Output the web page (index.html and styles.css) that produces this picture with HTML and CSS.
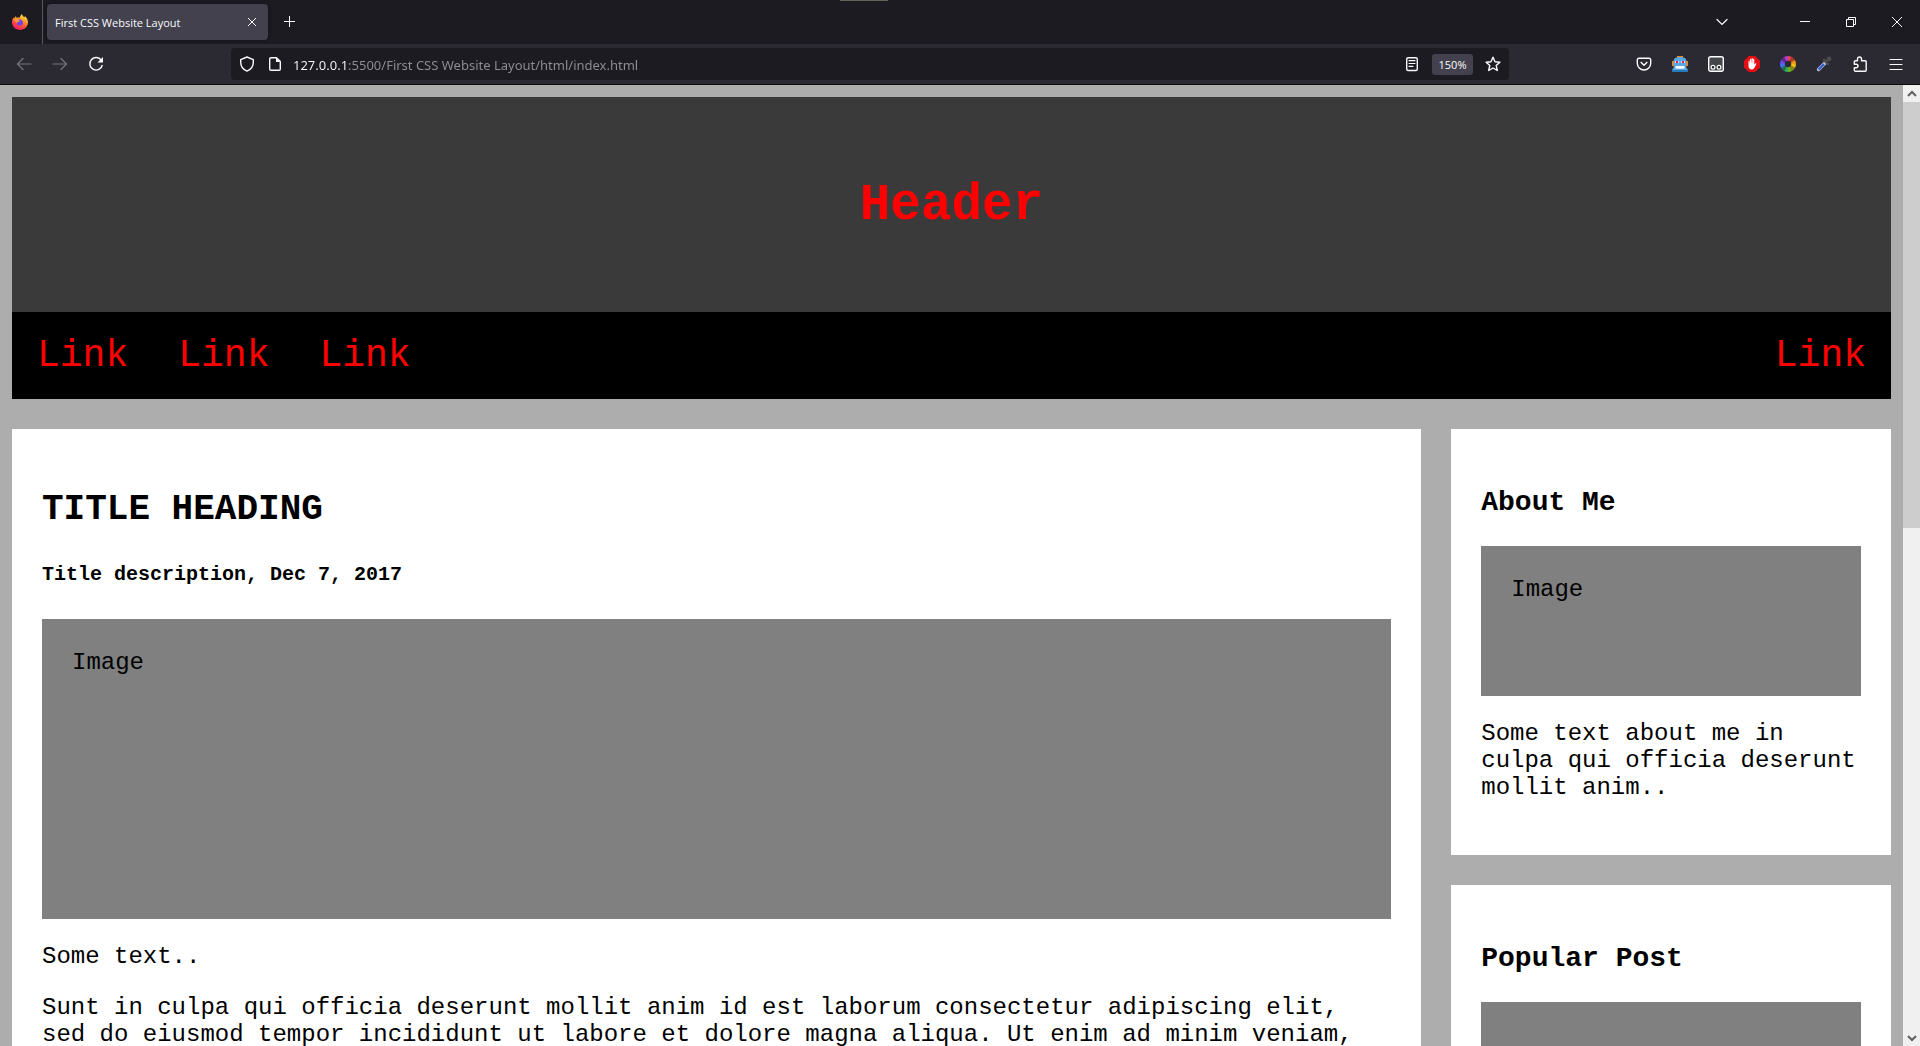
FILE: index.html
```html
<!DOCTYPE html>
<html lang="en">
<head>
<meta charset="utf-8">
<title>First CSS Website Layout</title>
<link rel="stylesheet" href="styles.css">
</head>
<body>
<header class="tabstrip">
  <div class="brand">
    <svg width="16" height="16" viewBox="0 0 16 16">
      <defs>
        <linearGradient id="flame" x1="0.8" y1="0" x2="0.3" y2="1"><stop offset="0" stop-color="#fff04a"/><stop offset=".35" stop-color="#ffa22b"/><stop offset=".65" stop-color="#ff5035"/><stop offset="1" stop-color="#f0186c"/></linearGradient>
      </defs>
      <path d="M10 0c.3 1.700 1.300 2.300 2.200 3.200.5-.1.600-.8.600-1.200C14.600 3.500 16 5.700 16 8.200c0 4.400-3.500 7.700-8 7.700s-8-3.400-8-7.700c0-2 .8-3.700 1.700-4.700L2.500 4C2.700 3.200 3.300 2.500 4 2c-.1.800.3 1.500.9 1.700C6.200 3.400 7 3.600 7.500 3.900 8 2.300 9 1 10 0z" fill="url(#flame)"/>
      <path d="M5.300 6.200c1-.9 2.800-1.200 4.200-.3 1.600 1 2 3.300.9 4.700-1.200 1.500-3.800 1.600-5.100.1-.6-.7-.8-1.500-.8-2.200l1.500-.6 1.700-.2c.4-.5-.7-.8-1.100-.8z" fill="#7542e5"/>
      <path d="M1.600 5.500c1.200-1.500 3.300-1.500 4.500-.3l1.700.6c.2.800-.8 1.300-1.600 1.400-.9.400-1.200 1.200-.7 2C4 9 3.300 6.500 1.600 5.500z" fill="#ff9640"/>
    </svg>
  </div>
  <div class="tab">
    <span class="tab-title">First CSS Website Layout</span>
    <button class="tab-close" aria-label="Close tab"><svg width="10" height="10" viewBox="0 0 10 10"><path d="M1 1l8 8M9 1l-8 8" class="thin"/></svg></button>
  </div>
  <button class="tool" aria-label="New tab"><svg width="12" height="12" viewBox="0 0 12 12"><path d="M5.500 0v11M0 5.500h11" class="thin"/></svg></button>
  <div class="window-controls">
    <button class="tool list" aria-label="List all tabs"><svg width="12" height="12" viewBox="0 0 12 12"><path d="M1 3.500l5 5 5-5" class="line"/></svg></button>
    <button class="win" aria-label="Minimize"><svg width="10" height="10" viewBox="0 0 10 10"><path d="M0 4.500h10" class="thin"/></svg></button>
    <button class="win" aria-label="Restore"><svg width="10" height="10" viewBox="0 0 10 10"><path d="M.5 2.500h7v7h-7zM2.500 2.500v-2h7v7h-2" class="thin"/></svg></button>
    <button class="win" aria-label="Close"><svg width="10" height="10" viewBox="0 0 10 10"><path d="M0 0l10 10M10 0L0 10" class="thin"/></svg></button>
  </div>
</header>

<div class="toolbar">
  <button class="tool" aria-label="Back" disabled><svg width="16" height="16" viewBox="0 0 16 16"><path d="M15 8H1.500M7 2.500L1.500 8 7 13.500" class="line"/></svg></button>
  <button class="tool" aria-label="Forward" disabled><svg width="16" height="16" viewBox="0 0 16 16"><path d="M1 8h13.500M9 2.500L14.500 8 9 13.500" class="line"/></svg></button>
  <button class="tool" aria-label="Reload"><svg width="16" height="16" viewBox="0 0 16 16"><path d="M13.300 4.200A6.300 6.300 0 1 0 14.300 9" class="bold"/><path d="M15 1v5.500H9.500z" class="solid"/></svg></button>
  <div class="urlbar">
    <button class="field-icon" aria-label="Tracking protection"><svg width="16" height="16" viewBox="0 0 16 16"><path d="M8 1l6.300 2.600v2.600c0 4-2.300 7.300-6.300 8.900C4 13.500 1.700 10.200 1.700 6.200V3.600z" class="bold"/></svg></button>
    <button class="field-icon" aria-label="Site information"><svg width="16" height="16" viewBox="0 0 16 16"><path d="M9.500 1.700H4a1.300 1.300 0 0 0-1.300 1.300v10A1.300 1.300 0 0 0 4 14.300h8a1.300 1.300 0 0 0 1.300-1.300V5.500z" class="bold"/><path d="M9 1.500V6h4.500z" class="solid"/></svg></button>
    <input class="address" type="text" aria-label="Address" value="127.0.0.1:5500/First CSS Website Layout/html/index.html">
    <button class="field-icon" aria-label="Reader view"><svg width="16" height="16" viewBox="0 0 16 16"><rect x="2.700" y="1.700" width="10.600" height="12.800" rx="1.500" class="bold"/><path d="M5 4.700h6M5 7.500h6M5 10.300h4" class="line"/></svg></button>
    <button class="zoom-level">150%</button>
    <button class="field-icon" aria-label="Bookmark this page"><svg width="16" height="16" viewBox="0 0 16 16"><path d="M8 1.200l2 4.500 4.900.5-3.700 3.300 1.100 5L8 12l-4.300 2.500 1.100-5L1.100 6.200 6 5.700z" class="bold"/></svg></button>
  </div>
  <button class="tool" aria-label="Save to Pocket"><svg width="16" height="16" viewBox="0 0 16 16"><path d="M3 2.200h10a1.700 1.700 0 0 1 1.700 1.700v3.400a6.700 6.700 0 0 1-13.400 0V3.900A1.700 1.700 0 0 1 3 2.200z" class="bold"/><path d="M4.700 6L8 9.200 11.300 6" class="bold"/></svg></button>
  <button class="tool" aria-label="Robot extension"><svg width="16" height="16" viewBox="0 0 16 16"><path d="M5 0h6v2H5zM0 5h2v5H0zM14 5h2v5h-2z" fill="#e58b1e"/><path d="M3 2Q8 0 13 2l1.300 2v7.500L16 14v2H0v-2l1.700-2.500V4z" fill="#56a9e6"/><path d="M0 14h16v2H0z" fill="#2a79b9"/><path d="M3 5h4v2H3zM9 5h4v2H9z" fill="#f1dce4"/><path d="M4 5h2v2H4zM10 5h2v2h-2z" fill="#e11d3c"/><path d="M3.500 10h9v2.700h-9z" fill="#fff"/></svg></button>
  <button class="tool" aria-label="Script manager"><svg width="16" height="16" viewBox="0 0 16 16"><rect x=".7" y=".7" width="14.600" height="14.600" rx="2" fill="#45474a" stroke="#fff" stroke-width="1.400"/><circle cx="5" cy="11.200" r="1.900" fill="#222" stroke="#fff" stroke-width="1.200"/><circle cx="11" cy="11.200" r="1.900" fill="#222" stroke="#fff" stroke-width="1.200"/></svg></button>
  <button class="tool" aria-label="Ad blocker"><svg width="16" height="16" viewBox="0 0 16 16"><path d="M4.700 0h6.600L16 4.700v6.600L11.300 16H4.700L0 11.300V4.700z" fill="#e40d13"/><path d="M4.500 5.200c0-.9 1.200-.9 1.200 0v2h.3V3.400c0-.9 1.200-.9 1.200 0v3h.3V2.700c0-.9 1.300-.9 1.300 0v3.700h.3V3.400c0-.9 1.200-.9 1.200 0v5.300l1-1.100c.5-.6 1.400-.2 1 .6l-2 3.900c-.5.900-1.200 1.300-2.300 1.300-2.200 0-3.500-1.300-3.500-3.500z" fill="#fff"/></svg></button>
  <button class="tool" aria-label="Colour picker"><svg width="16" height="16" viewBox="0 0 16 16"><path d="M8 8V0A8 8 0 0 1 12 1.070z" fill="#e8404c"/><path d="M8 8L12 1.070A8 8 0 0 1 14.930 4z" fill="#a43c2b"/><path d="M8 8L14.930 4A8 8 0 0 1 16 8z" fill="#f49a0b"/><path d="M8 8H16A8 8 0 0 1 14.930 12z" fill="#f3bd13"/><path d="M8 8L14.930 12A8 8 0 0 1 12 14.930z" fill="#858b16"/><path d="M8 8L12 14.930A8 8 0 0 1 8 16z" fill="#6eb51c"/><path d="M8 8V16A8 8 0 0 1 4 14.930z" fill="#35a853"/><path d="M8 8L4 14.930A8 8 0 0 1 1.070 12z" fill="#21725c"/><path d="M8 8L1.070 12A8 8 0 0 1 0 8z" fill="#4072f4"/><path d="M8 8H0A8 8 0 0 1 1.070 4z" fill="#6d4dea"/><path d="M8 8L1.070 4A8 8 0 0 1 4 1.070z" fill="#5b2c8e"/><path d="M8 8L4 1.070A8 8 0 0 1 8 0z" fill="#b33cc8"/><circle cx="8" cy="8" r="3.200" fill="#2b2a33"/></svg></button>
  <button class="tool" aria-label="Eyedropper"><svg width="16" height="16" viewBox="0 0 16 16"><path d="M2.500 13.500L9 7" stroke="#b9c4dc" stroke-width="3.200" stroke-linecap="round"/><path d="M2.500 13.500L8 8" stroke="#3158c8" stroke-width="2"/><path d="M8 4l4 4M10 6l3.500-3.500" stroke="#4c4c4e" stroke-width="2.500" stroke-linecap="round"/><circle cx="13.200" cy="2.800" r="2.300" fill="#4c4c4e"/></svg></button>
  <button class="tool" aria-label="Extensions"><svg width="16" height="16" viewBox="0 0 16 16"><path d="M5.500 4.700V3a2 2 0 0 1 4 0v1.700H13a1.200 1.200 0 0 1 1.200 1.200v8.400a1 1 0 0 1-1 1H3.500a1.200 1.200 0 0 1-1.200-1.200v-2.300h1.900a1.800 1.800 0 0 0 0-3.600H2.300V5.900a1.200 1.200 0 0 1 1.200-1.200z" class="bold"/></svg></button>
  <button class="tool" aria-label="Menu"><svg width="16" height="16" viewBox="0 0 16 16"><path d="M2 3.500h12M2 8.500h12M2 13.500h12" class="line"/></svg></button>
</div>

<div class="viewport">
  <div class="page">
    <div class="banner"><h1>Header</h1></div>
    <nav class="topnav">
      <a href="#">Link</a>
      <a href="#">Link</a>
      <a href="#">Link</a>
      <a href="#" class="last">Link</a>
    </nav>
    <div class="columns">
      <main class="card">
        <h2>TITLE HEADING</h2>
        <h5>Title description, Dec 7, 2017</h5>
        <div class="image tall">Image</div>
        <p>Some text..</p>
        <p>Sunt in culpa qui officia deserunt mollit anim id est laborum consectetur adipiscing elit, sed do eiusmod tempor incididunt ut labore et dolore magna aliqua. Ut enim ad minim veniam,</p>
      </main>
      <aside class="side">
        <section class="card">
          <h3>About Me</h3>
          <div class="image">Image</div>
          <p>Some text about me in culpa qui officia deserunt mollit anim..</p>
        </section>
        <section class="card">
          <h3>Popular Post</h3>
          <div class="image"></div>
        </section>
      </aside>
    </div>
  </div>
  <div class="scrollbar">
    <button aria-label="Scroll up"><svg width="10" height="8" viewBox="0 0 10 8"><path d="M1 6l4-4 4 4"/></svg></button>
    <div class="track"><div class="thumb"></div></div>
    <button aria-label="Scroll down"><svg width="10" height="8" viewBox="0 0 10 8"><path d="M1 2l4 4 4-4"/></svg></button>
  </div>
</div>
</body>
</html>
```

FILE: styles.css
```css
* { box-sizing: border-box; }

body {
  margin: 0;
  height: 100vh;
  display: flex;
  flex-direction: column;
  overflow: hidden;
  font-family: "Open Sans", "Noto Sans", sans-serif;
  color: #fbfbfe;
}

button {
  display: flex;
  align-items: center;
  justify-content: center;
  flex: none;
  margin: 0;
  padding: 0;
  border: 0;
  background: none;
  color: inherit;
  font: inherit;
}

button:disabled { color: #75747b; }

svg { display: block; }
.line, .thin, .bold { fill: none; stroke: currentColor; }
.line { stroke-width: 1.2; stroke-linecap: round; }
.thin { stroke-width: 1; }
.bold { stroke-width: 1.4; stroke-linejoin: round; }
.solid { fill: currentColor; }

/* Browser window */
.tabstrip {
  position: relative;
  display: flex;
  align-items: center;
  flex: none;
  height: 44px;
  background: #1c1b22;
}

.tabstrip::before {
  content: "";
  position: absolute;
  top: 0;
  left: calc(50% - 120px);
  width: 48px;
  height: 1px;
  background: #62625d;
}

.brand {
  display: flex;
  align-items: center;
  justify-content: center;
  width: 43px;
  height: 44px;
  padding-right: 2px;
  border-right: 1px solid #5a5960;
}

.tab {
  display: flex;
  align-items: center;
  justify-content: space-between;
  width: 221px;
  height: 36px;
  margin: 0 4px;
  padding: 0 4px 0 8px;
  border-radius: 4px;
  background: #42414d;
  box-shadow: 0 0 4px #111014;
  font-size: 11px;
}

.tab-close { width: 24px; height: 24px; }
.tool { width: 36px; height: 32px; }

.window-controls { display: flex; align-items: center; margin-left: auto; }
.list { margin-right: 42px; }
.win { width: 46px; height: 44px; }

.toolbar {
  display: flex;
  align-items: center;
  flex: none;
  height: 41px;
  padding: 0 6px;
  border-bottom: 1px solid #0c0c0d;
  background: #2b2a33;
}

.urlbar {
  display: flex;
  align-items: center;
  flex: 1;
  height: 32px;
  margin: 0 117px;
  padding: 0 2px;
  border-radius: 4px;
  background: #1c1b22;
}

.field-icon { width: 28px; height: 28px; }

/* The host part of the address is white, the rest is dimmed. */
.address {
  flex: 1;
  min-width: 0;
  height: 28px;
  margin: 0 4px;
  padding: 2px 0 0;
  border: 0;
  outline: 0;
  background: linear-gradient(90deg, #fbfbfe 56px, #8f8f94 56px);
  background-clip: text;
  -webkit-background-clip: text;
  color: transparent;
  font: 13px "Noto Sans", "Open Sans", sans-serif;
}

.zoom-level {
  width: 41px;
  height: 21px;
  margin: 0 6px;
  border-radius: 3px;
  background: #42414d;
  font-size: 11px;
}

.viewport {
  display: flex;
  flex: 1;
  min-height: 0;
  background: #adadad;
}

.scrollbar {
  display: flex;
  flex-direction: column;
  flex: none;
  width: 17px;
  background: #f0f0f0;
}

.scrollbar button { height: 17px; }
.scrollbar path { fill: none; stroke: #606060; stroke-width: 2; }
.track { flex: 1; }
.thumb { height: 46%; background: #cdcdcd; }

/* Web page */
.page {
  flex: 1;
  min-width: 0;
  padding: 12px;
  overflow: hidden;
  color: #000;
  font: 24px/27px "Liberation Mono", "Courier New", monospace;
}

.banner {
  padding: 80px 30px 77px;
  background: #3a3a3a;
  color: #f00;
  text-align: center;
}

h1 { margin: 0; font-size: 51px; line-height: 58px; }
h2 { margin: 30px 0; font-size: 36px; line-height: 41px; }
h3 { margin: 28px 0; font-size: 28px; line-height: 31px; }
h5 { margin: 33px 0; font-size: 20px; line-height: 23px; }
p { margin: 24px 0; }

.topnav { display: flex; background: #000; }

.topnav a {
  padding: 23px 25px;
  color: #f00;
  font-size: 38px;
  line-height: 41px;
  text-decoration: none;
}

.topnav .last { margin-left: auto; }

.columns {
  display: grid;
  grid-template-columns: 75% 1fr;
  column-gap: 30px;
  margin-top: 30px;
}

.side { display: flex; flex-direction: column; gap: 30px; }

/* Flow-root keeps the heading margins inside the card. */
.card { display: flow-root; padding: 30px; background: #fff; }

.image { min-height: 150px; padding: 30px; background: #808080; }
.tall { min-height: 300px; }
```
